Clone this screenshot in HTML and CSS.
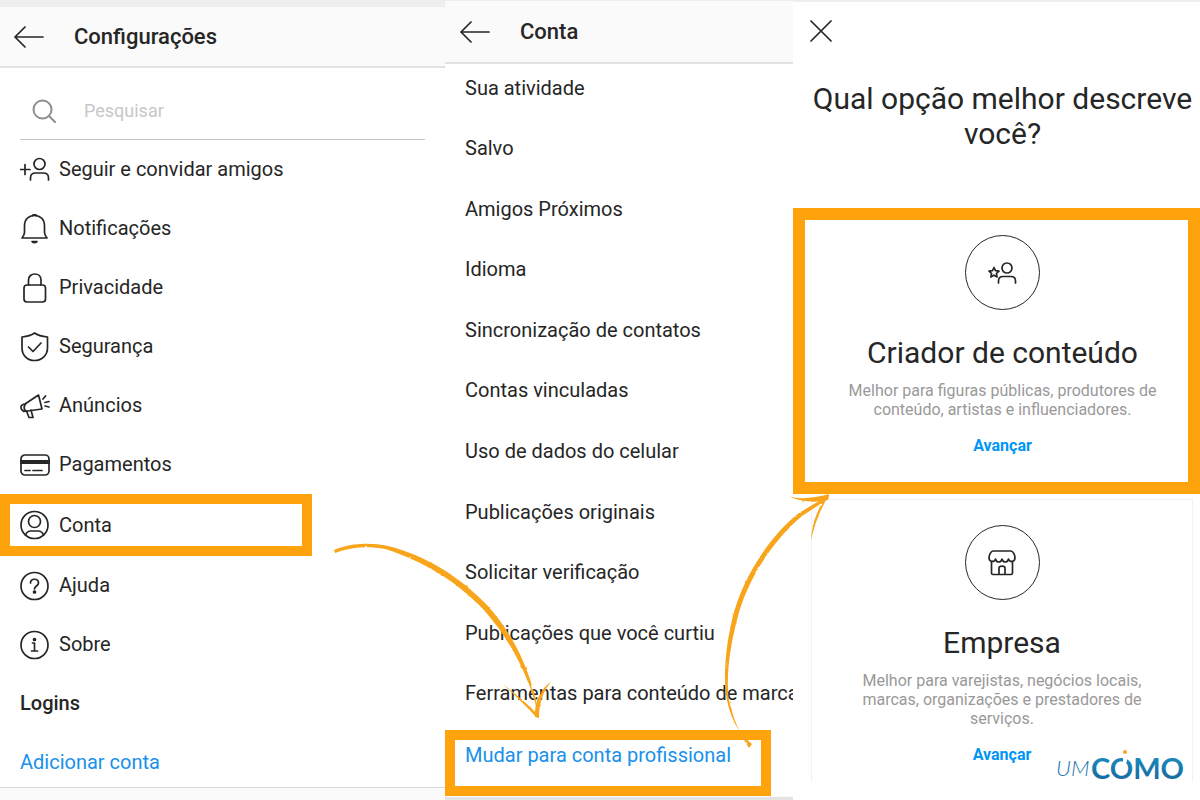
FILE: index.html
```html
<!DOCTYPE html>
<html lang="pt-BR">
<head>
<meta charset="UTF-8" />
<meta name="viewport" content="width=device-width, initial-scale=1.0" />
<title>Mudar para conta profissional</title>
<link rel="stylesheet" href="styles.css">
</head>
<body>
<main class="board">

  <!-- Configurações -->
  <section class="panel settings">
    <header class="topbar">
      <button class="icon-btn" type="button" aria-label="Voltar">
        <svg width="30" height="22" viewBox="0 0 30 22"><path d="M11 1 1 11l10 10M1 11h28" /></svg>
      </button>
      <h1>Configurações</h1>
    </header>
    <div class="search">
      <label for="search" aria-label="Pesquisar">
        <svg width="24" height="24" viewBox="0 0 24 24"><circle cx="10.500" cy="10.500" r="9" /><path d="m17 17 6 6" /></svg>
      </label>
      <input id="search" type="text" placeholder="Pesquisar" />
    </div>
    <nav class="menu">
      <a href="#"><svg viewBox="0 0 30 30"><path d="M0 14.500h10M5 9.500v10" /><circle cx="19.500" cy="9" r="5.500" /><path d="M10.500 25v-2c0-3 2-5 5-5h8c3 0 5 2 5 5v2" /></svg>Seguir e convidar amigos</a>
      <a href="#"><svg viewBox="0 0 30 30"><path d="M14.500 1.500c-6 0-10 4-10 10v7c0 2-1 3.500-2.500 5.500h25c-1.500-2-2.500-3.500-2.500-5.500v-7c0-6-4-10-10-10z" /><path d="M12.500 1.500c1-1 3-1 4 0" /><path class="fill" d="M12 27.500h5c-.5 1.500-4.500 1.500-5 0z" /></svg>Notificações</a>
      <a href="#"><svg viewBox="0 0 30 30"><rect x="4" y="12" width="21.500" height="17" rx="3" /><path d="M8.500 12V7c0-8 12.500-8 12.500 0v5" /></svg>Privacidade</a>
      <a href="#"><svg viewBox="0 0 30 30"><path d="M14.500 1C11 3.500 7 4.500 2 5v11c0 7 5 12.500 12.500 12.500S27.500 23 27.500 16V5c-5-.5-9.500-1.500-13-4z" /><path d="m8.500 15 4.500 4.500 8-8.500" /></svg>Segurança</a>
      <a href="#"><svg viewBox="0 0 30 30"><path d="M18.500 4 5 13c-4 0-5 3.500-3 6l2 1.500 18-2.500z" /><path d="M5.500 13c-1.500 2-1.500 5 0 7" /><path d="m6.500 20 2.500 6.500h4l-2-7.500M23 8l2.500-3M25 11.500l4-1M25 15l4 1" /></svg>Anúncios</a>
      <a href="#"><svg viewBox="0 0 30 30"><rect x="1" y="5" width="28" height="20" rx="4" /><path class="thick" d="M1 12h28" /><path d="M5 20.500h5M13 20.500h9" /></svg>Pagamentos</a>
      <a class="highlight" href="#"><svg viewBox="0 0 30 30"><circle cx="14.500" cy="15" r="13.500" /><circle cx="14.500" cy="11.500" r="6" /><path d="M5.500 25c1-3 3-4 5.500-4h7c2.500 0 4.500 1 5.500 4" /></svg>Conta</a>
      <a href="#"><svg viewBox="0 0 30 30"><circle cx="14.500" cy="15" r="13.500" /><path class="mark" d="M10.500 12c0-5 8-5 8 0 0 3-4 3-4 6" /><circle class="fill" cx="14.500" cy="21" r="1" /></svg>Ajuda</a>
      <a href="#"><svg viewBox="0 0 30 30"><circle cx="14.500" cy="15" r="13.500" /><path class="mark" d="M12.500 13h2v8M11.500 21h6" /><circle class="fill" cx="14.500" cy="9.500" r="1" /></svg>Sobre</a>
      <h2>Logins</h2>
      <a class="add" href="#">Adicionar conta</a>
    </nav>
    <footer class="bottombar"></footer>
  </section>

  <!-- Conta -->
  <section class="panel account">
    <header class="topbar">
      <button class="icon-btn" type="button" aria-label="Voltar">
        <svg width="30" height="22" viewBox="0 0 30 22"><path d="M11 1 1 11l10 10M1 11h28" /></svg>
      </button>
      <h1>Conta</h1>
    </header>
    <nav class="options">
      <a href="#">Sua atividade</a>
      <a href="#">Salvo</a>
      <a href="#">Amigos Próximos</a>
      <a href="#">Idioma</a>
      <a href="#">Sincronização de contatos</a>
      <a href="#">Contas vinculadas</a>
      <a href="#">Uso de dados do celular</a>
      <a href="#">Publicações originais</a>
      <a href="#">Solicitar verificação</a>
      <a href="#">Publicações que você curtiu</a>
      <a href="#">Ferramentas para conteúdo de marca</a>
    </nav>
    <a class="switch" href="#">Mudar para conta profissional</a>
    <footer class="bottombar"></footer>
  </section>

  <!-- Tipo de conta profissional -->
  <section class="panel type">
    <button class="icon-btn close" type="button" aria-label="Fechar">
      <svg width="22" height="22" viewBox="0 0 22 22"><path d="m1 1 20 20M21 1 1 21" /></svg>
    </button>
    <h1>Qual opção melhor descreve você?</h1>
    <article class="card selected">
      <div class="round">
        <svg width="30" height="24" viewBox="0 0 30 24"><path d="m6 6.500 1.500 3.200 3.500.4-2.600 2.400.7 3.500L6 14.300 2.900 16l.7-3.500L1 10.100l3.500-.4z" /><circle cx="19" cy="7" r="5" /><path d="M10.500 22v-2c0-3 1.500-4.500 4.500-4.500h8c3 0 4.500 1.500 4.500 4.500v2" /></svg>
      </div>
      <h2>Criador de conteúdo</h2>
      <p>Melhor para figuras públicas, produtores de conteúdo, artistas e influenciadores.</p>
      <a href="#">Avançar</a>
    </article>
    <article class="card">
      <div class="round">
        <svg width="30" height="28" viewBox="0 0 30 28"><path d="M6 2h18c2 0 4 4 4 6.500 0 5-5.500 5-6.500 1.500-1 4-5.500 4-6.500 0-1 4-5.500 4-6.500 0C7.500 13.500 2 13.500 2 8.500 2 6 4 2 6 2z" /><path d="M4.500 13v11c0 1 .5 1.500 1.500 1.500h18c1 0 1.500-.5 1.500-1.500V13M12 25v-6c0-2.500 6-2.500 6 0v6" /></svg>
      </div>
      <h2>Empresa</h2>
      <p>Melhor para varejistas, negócios locais, marcas, organizações e prestadores de serviços.</p>
      <a href="#">Avançar</a>
    </article>
    <svg class="logo" width="132" height="34" viewBox="0 0 132 34" role="img" aria-label="umCOMO">
      <defs>
        <linearGradient id="blue" x1="0" y1="0" x2="0" y2="1">
          <stop offset="0" stop-color="#1d93c4" />
          <stop offset="1" stop-color="#14649c" />
        </linearGradient>
      </defs>
      <text class="um" x="0" y="28">UM</text>
      <text class="como" x="35" y="31">COMO</text>
      <path class="notch" d="M69 5v8" />
      <circle class="dot" cx="69" cy="4" r="2" />
    </svg>
  </section>

  <!-- setas -->
  <svg class="arrows" viewBox="0 0 1200 800" preserveAspectRatio="none" aria-hidden="true">
    <defs>
      <filter id="brush" x="-5%" y="-5%" width="110%" height="110%">
        <feTurbulence type="fractalNoise" baseFrequency="0.2" numOctaves="2" seed="4" />
        <feDisplacementMap in="SourceGraphic" scale="2" xChannelSelector="R" yChannelSelector="G" />
      </filter>
    </defs>
    <g filter="url(#brush)">
      <path d="M334 550C350 543 370 542 388 546C425 555 460 577 486 604C510 630 527 662 536 700L538 715L535 702C524 666 507 636 483 609C457 582 424 561 385 549C368 546 350 547 335 553Z" />
      <path d="M503 684C514 693 527 703 537 714L536 717C526 705 514 695 503 684Z" />
      <path d="M552 681C544 689 539 702 539 718L535 717C534 702 541 688 552 681Z" />
      <path d="M752 744C737 733 730 715 727 700C723 680 725 650 732 620C741 580 770 535 799 513L829 495L828 499L802 516C774 539 746 581 737 620C729 650 726 680 729 700C733 717 738 731 749 748Z" />
      <path d="M788 496C801 500 814 498 829 494L828 500C815 503 801 502 788 496Z" />
      <path d="M829 495C821 508 815 522 811 540C812 523 818 508 826 497Z" />
    </g>
  </svg>
</main>
</body>
</html>
```
FILE: styles.css
```css
* {
  box-sizing: border-box;
}
body {
  margin: 0;
  font-family: Roboto, "Liberation Sans", sans-serif;
  font-size: 20px;
  line-height: 23px;
  color: #262626;
  background: #fff;
}
a {
  color: inherit;
  text-decoration: none;
}
h1, h2, p {
  margin: 0;
}
svg {
  flex: none;
  fill: none;
  stroke: #262626;
  stroke-width: 1.7;
  stroke-linecap: round;
  stroke-linejoin: round;
}
.board {
  position: relative;
  display: grid;
  grid-template-columns: 445fr 348fr 407fr;
  min-height: 100vh;
}
.panel {
  display: flex;
  flex-direction: column;
  min-width: 0;
}
.icon-btn {
  display: flex;
  padding: 0;
  border: none;
  background: none;
  cursor: pointer;
}

/* top bars */
.topbar {
  display: flex;
  align-items: center;
  gap: 30px;
  height: 68px;
  padding-left: 14px;
  background: #fafafa;
  border-top: 7px solid #eee;
  border-bottom: 2px solid #e2e2e2;
}
.topbar h1 {
  font-size: 22px;
  font-weight: 500;
  line-height: 26px;
}
.account .topbar {
  height: 64px;
  padding-left: 15px;
  border-top: 1px solid #eee;
}
.bottombar {
  flex: 1;
  background: #fafafa;
  border-top: 1px solid #d8d8d8;
}

/* search */
.search {
  display: flex;
  align-items: center;
  gap: 28px;
  height: 72px;
  margin: 0 20px;
  padding: 14px 12px 0;
  border-bottom: 1px solid #c4c4c4;
}
.search label {
  display: flex;
}
.search svg {
  stroke: #8e8e8e;
  stroke-width: 2;
}
.search input {
  flex: 1;
  min-width: 0;
  padding: 0;
  border: none;
  outline: none;
  background: none;
  font: inherit;
  font-size: 18px;
}
.search input::placeholder {
  color: #c7c7c7;
  opacity: 1;
}

/* settings menu */
.menu a, .menu h2 {
  display: flex;
  align-items: center;
  gap: 9px;
  height: 59px;
  padding-left: 20px;
}
.menu svg {
  width: 30px;
  height: 30px;
}
.menu .fill {
  fill: #262626;
}
.menu .thick {
  stroke-width: 4;
}
.menu h2 {
  font-size: 20px;
  font-weight: 500;
}
.menu .highlight {
  width: 70%;
  height: 62px;
  padding-left: 10px;
  border: 10px solid #fea30c;
}
.menu .add {
  height: 54px;
  padding-top: 5px;
  color: #1990ea;
}

/* account options */
.options {
  flex: 1;
  display: grid;
  grid-auto-rows: 1fr;
  overflow: hidden;
}
.options a {
  display: flex;
  align-items: center;
  padding: 0 0 12px 20px;
  white-space: nowrap;
}
.switch {
  align-self: flex-start;
  height: 66px;
  padding: 4px 30px 0 10px;
  border: 10px solid #fea30c;
  color: #1990ea;
  white-space: nowrap;
}
.account .bottombar {
  flex: none;
  height: 4px;
  background: #e4e4e4;
  border-top-color: #fafafa;
}

/* account type */
.type {
  position: relative;
  border-top: 2px solid #eee;
}
.close {
  align-self: flex-start;
  margin: 18px 0 0 17px;
}
.type h1 {
  padding: 39px 0 57px 12px;
  font-size: 30px;
  font-weight: 400;
  line-height: 35px;
  text-align: center;
}
.card {
  display: flex;
  flex-direction: column;
  align-items: center;
  margin: 5px 7px 0 18px;
  padding: 25px 30px 18px;
  border: 1px solid #f2f2f2;
  border-bottom: none;
  text-align: center;
}
.card.selected {
  margin: 0;
  padding: 15px 28px 27px 40px;
  border: 12px solid #fea30c;
}
.round {
  display: flex;
  align-items: center;
  justify-content: center;
  width: 75px;
  height: 75px;
  border: 1px solid #262626;
  border-radius: 50%;
}
.card h2 {
  margin: 25px 0 11px;
  font-size: 30px;
  font-weight: 400;
  line-height: 35px;
}
.card p {
  color: #999;
  font-size: 16px;
  line-height: 19px;
}
.card a {
  margin-top: 17px;
  color: #0095f6;
  font-size: 16px;
  font-weight: 700;
  line-height: 19px;
}

/* logo */
.logo {
  position: absolute;
  right: 12px;
  bottom: 18px;
  stroke: none;
}
.um {
  fill: #1a74a8;
  font: italic 300 22px Lato, sans-serif;
}
.como {
  fill: url(#blue);
  font: 700 29px Lato, sans-serif;
}
.notch {
  stroke: #fff;
  stroke-width: 4;
}
.dot {
  fill: #f5a623;
}

/* arrows */
.arrows {
  position: absolute;
  inset: 0;
  width: 100%;
  height: 100%;
  fill: #f8a51b;
  stroke: none;
  pointer-events: none;
}
```
